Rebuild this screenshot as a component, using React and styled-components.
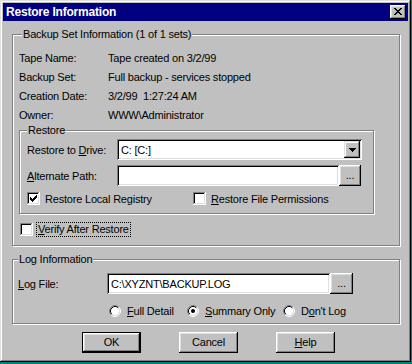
import React from 'react'
import styled, { createGlobalStyle } from 'styled-components'

const Global = createGlobalStyle`
  html, body {
    margin: 0;
    padding: 0;
    background: #008080;
  }
  body {
    font-family: "Liberation Sans", Arial, sans-serif;
    font-size: 11px;
    letter-spacing: -0.2px;
    color: #000;
  }
`

const Window = styled.div`
  width: 411px;
  height: 362px;
  box-sizing: border-box;
  padding: 3px;
  background: #c0c0c0;
  box-shadow: inset -1px -1px 0 #000, inset 1px 1px 0 #dfdfdf,
    inset -2px -2px 0 #808080, inset 2px 2px 0 #fff;
  display: flex;
  flex-direction: column;
`

const TitleBar = styled.div`
  height: 18px;
  flex: none;
  background: #000080;
  color: #fff;
  display: flex;
  align-items: center;
  justify-content: space-between;
  padding: 0 2px 0 3px;
  font-weight: bold;
  font-size: 12px;
  letter-spacing: -0.2px;
`

const CloseButton = styled.div`
  width: 16px;
  height: 14px;
  box-sizing: border-box;
  background: #c0c0c0;
  box-shadow: inset -1px -1px 0 #000, inset 1px 1px 0 #fff,
    inset -2px -2px 0 #808080, inset 2px 2px 0 #dfdfdf;
  display: flex;
  align-items: center;
  justify-content: center;
  padding: 0 1px 1px 0;
`

const Content = styled.div`
  padding-left: 9px;
  display: flex;
  flex-direction: column;
`

const Group = styled.fieldset`
  margin: ${p => p.$mt || 0}px 0 0 ${p => p.$ml || 0}px;
  padding: ${p => p.$pad};
  width: ${p => p.$w}px;
  min-width: 0;
  box-sizing: border-box;
  border: 1px solid #808080;
  box-shadow: inset 1px 1px 0 #fff, 1px 1px 0 #fff;
`

const Caption = styled.legend`
  padding: 0 1px;
  margin-left: ${p => p.$ml || 0}px;
  line-height: 13px;
  background: #c0c0c0;
`

const InfoRow = styled.div`
  height: 19px;
  display: flex;
  align-items: center;
`

const Label = styled.span`
  width: ${p => p.$w}px;
  flex: none;
  white-space: nowrap;
`

const Value = styled.span`
  white-space: pre;
`

const FieldRow = styled.div`
  height: 21px;
  margin-top: ${p => p.$mt || 0}px;
  display: flex;
  align-items: center;
`

const Field = styled.div`
  width: ${p => p.$w}px;
  height: 21px;
  box-sizing: border-box;
  background: #fff;
  padding: 2px 2px 2px 4px;
  display: flex;
  align-items: center;
  justify-content: space-between;
  white-space: nowrap;
  box-shadow: inset 1px 1px 0 #808080, inset -1px -1px 0 #fff,
    inset 2px 2px 0 #000, inset -2px -2px 0 #dfdfdf;
`

const DropButton = styled.div`
  width: 16px;
  height: 17px;
  box-sizing: border-box;
  background: #c0c0c0;
  box-shadow: inset -1px -1px 0 #000, inset 1px 1px 0 #dfdfdf,
    inset -2px -2px 0 #808080, inset 2px 2px 0 #fff;
  display: flex;
  align-items: center;
  justify-content: center;
`

const Button = styled.button`
  width: ${p => p.$w || 59}px;
  height: ${p => p.$h || 21}px;
  box-sizing: border-box;
  margin: 0;
  padding: 0 0 1px;
  font: inherit;
  letter-spacing: inherit;
  color: #000;
  background: #c0c0c0;
  border: ${p => (p.$default ? '1px solid #000' : 'none')};
  box-shadow: inset -1px -1px 0 #000, inset 1px 1px 0 #fff,
    inset -2px -2px 0 #808080, inset 2px 2px 0 #dfdfdf;
  display: flex;
  align-items: center;
  justify-content: center;
`

const OptionRow = styled.div`
  height: 17px;
  margin: ${p => p.$mt || 0}px 0 0 ${p => p.$ml || 0}px;
  display: flex;
  align-items: center;
`

const Option = styled.label`
  width: ${p => (p.$w ? `${p.$w}px` : 'auto')};
  flex: none;
  display: flex;
  align-items: center;
  gap: ${p => p.$gap || 5}px;
  white-space: nowrap;
`

const Focus = styled.span`
  outline: 1px dotted #000;
  padding: 0 1px;
  line-height: 13px;
`

const Buttons = styled.div`
  margin-top: 8px;
  margin-left: -3px;
  display: flex;
  justify-content: center;
  gap: 38px;
`

const CloseGlyph = () => (
  <svg width="8" height="7" viewBox="0 0 8 7" shapeRendering="crispEdges">
    <path
      fill="#000"
      d="M0 0h2v1h-2z M6 0h2v1h-2z M1 1h2v1h-2z M5 1h2v1h-2z M2 2h4v1h-4z M3 3h2v1h-2z M2 4h4v1h-4z M1 5h2v1h-2z M5 5h2v1h-2z M0 6h2v1h-2z M6 6h2v1h-2z"
    />
  </svg>
)

const DownArrow = () => (
  <svg width="7" height="4" viewBox="0 0 7 4" shapeRendering="crispEdges">
    <path fill="#000" d="M0 0h7v1h-7z M1 1h5v1h-5z M2 2h3v1h-3z M3 3h1v1h-1z" />
  </svg>
)

const CheckBox = ({ checked }) => (
  <svg width="13" height="13" viewBox="0 0 13 13" shapeRendering="crispEdges">
    <rect x="0" y="0" width="13" height="13" fill="#fff" />
    <path fill="#808080" d="M0 0h12v1h-12z M0 1h1v11h-1z" />
    <path fill="#000" d="M1 1h10v1h-10z M1 2h1v9h-1z" />
    <path fill="#dfdfdf" d="M1 11h11v1h-11z M11 1h1v10h-1z" />
    {checked && (
      <path
        fill="#000"
        d="M9 3h1v1h-1z M8 4h2v1h-2z M3 5h1v1h-1z M7 5h3v1h-3z M3 6h2v1h-2z M6 6h3v1h-3z M3 7h5v1h-5z M4 8h3v1h-3z M5 9h1v1h-1z"
      />
    )}
  </svg>
)

const Radio = ({ checked }) => (
  <svg width="12" height="12" viewBox="0 0 12 12">
    <circle cx="6" cy="6" r="4.5" fill="#fff" />
    <path d="M2.11 9.89 A5.5 5.5 0 0 1 9.89 2.11" stroke="#808080" fill="none" />
    <path d="M9.89 2.11 A5.5 5.5 0 0 1 2.11 9.89" stroke="#fff" fill="none" />
    <path d="M2.82 9.18 A4.5 4.5 0 0 1 9.18 2.82" stroke="#000" fill="none" />
    <path d="M9.18 2.82 A4.5 4.5 0 0 1 2.82 9.18" stroke="#dfdfdf" fill="none" />
    {checked && <circle cx="6" cy="6" r="2" fill="#000" />}
  </svg>
)

const info = [
  ['Tape Name:', 'Tape created on 3/2/99'],
  ['Backup Set:', 'Full backup - services stopped'],
  ['Creation Date:', '3/2/99  1:27:24 AM'],
  ['Owner:', 'WWW\\Administrator'],
]

export default function App() {
  return (
    <>
      <Global />
      <Window>
        <TitleBar>
          <span>Restore Information</span>
          <CloseButton>
            <CloseGlyph />
          </CloseButton>
        </TitleBar>
        <Content>
          <Group $mt={7} $w={388} $pad="7px 6px 7px 6px">
            <Caption $ml={3}>Backup Set Information (1 of 1 sets)</Caption>
            {info.map(([k, v]) => (
              <InfoRow key={k}>
                <Label $w={89}>{k}</Label>
                <Value>{v}</Value>
              </InfoRow>
            ))}
            <Group $w={355} $pad="2px 6px 6px 7px">
              <Caption>Restore</Caption>
              <FieldRow>
                <Label $w={90}>
                  Restore to <u>D</u>rive:
                </Label>
                <Field $w={245}>
                  <span>C: [C:]</span>
                  <DropButton>
                    <DownArrow />
                  </DropButton>
                </Field>
              </FieldRow>
              <FieldRow $mt={5}>
                <Label $w={90}>
                  <u>A</u>lternate Path:
                </Label>
                <Field $w={222} />
                <Button $w={22}>...</Button>
              </FieldRow>
              <OptionRow $mt={4}>
                <Option $w={166}>
                  <CheckBox checked />
                  <span>Restore Local Registry</span>
                </Option>
                <Option>
                  <CheckBox />
                  <span>
                    <u>R</u>estore File Permissions
                  </span>
                </Option>
              </OptionRow>
            </Group>
            <OptionRow $mt={7} $ml={1}>
              <Option $gap={4}>
                <CheckBox />
                <Focus>
                  <u>V</u>erify After Restore
                </Focus>
              </Option>
            </OptionRow>
          </Group>
          <Group $mt={7} $w={388} $pad="7px 6px 4px 5px">
            <Caption>Log Information</Caption>
            <FieldRow>
              <Label $w={89}>
                <u>L</u>og File:
              </Label>
              <Field $w={223}>
                <span>C:\XYZNT\BACKUP.LOG</span>
              </Field>
              <Button $w={23}>...</Button>
            </FieldRow>
            <OptionRow $mt={8} $ml={91}>
              <Option $w={78} $gap={6}>
                <Radio />
                <span>
                  <u>F</u>ull Detail
                </span>
              </Option>
              <Option $w={96} $gap={6}>
                <Radio checked />
                <span>
                  <u>S</u>ummary Only
                </span>
              </Option>
              <Option $gap={6}>
                <Radio />
                <span>
                  D<u>o</u>n't Log
                </span>
              </Option>
            </OptionRow>
          </Group>
          <Buttons>
            <Button $default>OK</Button>
            <Button>Cancel</Button>
            <Button>
              <u>H</u>elp
            </Button>
          </Buttons>
        </Content>
      </Window>
    </>
  )
}
